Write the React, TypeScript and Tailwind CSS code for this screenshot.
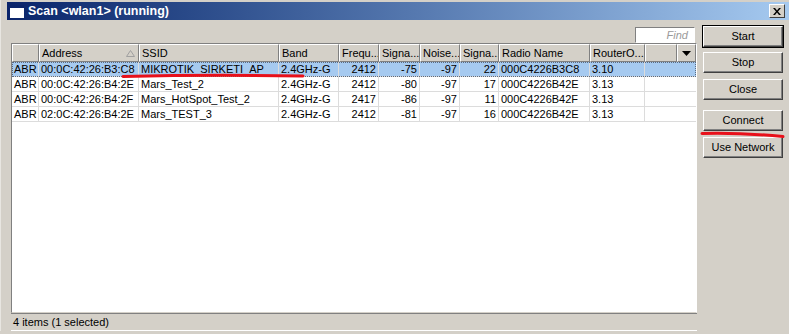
import React from "react";

type Col = { label: string; w: number; right?: boolean };

const cols: Col[] = [
  { label: "", w: 27 },
  { label: "Address", w: 100 },
  { label: "SSID", w: 140 },
  { label: "Band", w: 60 },
  { label: "Frequ...", w: 40, right: true },
  { label: "Signa...", w: 41, right: true },
  { label: "Noise...", w: 40, right: true },
  { label: "Signa...", w: 39, right: true },
  { label: "Radio Name", w: 91 },
  { label: "RouterO...", w: 55 },
  { label: "", w: 32 },
  { label: "", w: 19 },
];

const rows: string[][] = [
  ["ABR", "00:0C:42:26:B3:C8", "MIKROTIK_SIRKETI_AP", "2.4GHz-G", "2412", "-75", "-97", "22", "000C4226B3C8", "3.10", "", ""],
  ["ABR", "00:0C:42:26:B4:2E", "Mars_Test_2", "2.4GHz-G", "2412", "-80", "-97", "17", "000C4226B42E", "3.13", "", ""],
  ["ABR", "00:0C:42:26:B4:2F", "Mars_HotSpot_Test_2", "2.4GHz-G", "2417", "-86", "-97", "11", "000C4226B42F", "3.13", "", ""],
  ["ABR", "02:0C:42:26:B4:2E", "Mars_TEST_3", "2.4GHz-G", "2412", "-81", "-97", "16", "000C4226B42E", "3.13", "", ""],
];

const WinButton = ({ label, isDefault }: { label: string; isDefault?: boolean }) => (
  <div className={isDefault ? "border border-black" : "border border-transparent"}>
    <div className="h-[21px] flex items-center justify-center border border-t-white border-l-white border-r-[#404040] border-b-[#404040] shadow-[inset_-1px_-1px_0_#808080] text-[11px] text-black">
      {label}
    </div>
  </div>
);

export default function App() {
  return (
    <div className="relative w-[789px] h-[334px] bg-[#d4d0c8] overflow-hidden font-['Liberation_Sans',Arial,sans-serif] text-black">
      <div className="pl-[6px] pt-[2px] border-l-[1px] border-[#e8e6e1]">
        {/* Title bar */}
        <div className="h-[18px] flex items-center bg-gradient-to-r from-[#0a246a] to-[#a6caf0] pl-[2px] pr-[4px]">
          <div className="w-[15px] h-[13px] bg-white border-t-[3px] border-l-[1px] border-[#0a246a] mr-[4px]" />
          <span className="text-[12.5px] font-bold text-white leading-none">Scan &lt;wlan1&gt; (running)</span>
          <div className="ml-auto w-[16px] h-[14px] bg-[#d4d0c8] border border-t-white border-l-white border-r-[#404040] border-b-[#404040] flex items-center justify-center">
            <svg width="8" height="7" viewBox="0 0 8 7">
              <path d="M0 0h2l2 2.5L6 0h2L5 3.5 8 7H6L4 4.5 2 7H0l3-3.5z" fill="#000" />
            </svg>
          </div>
        </div>

        <div className="flex">
          {/* Left: table */}
          <div className="ml-[4px] w-[686px]">
            <div className="flex justify-end pt-[7px] pr-[2px]">
              <div className="w-[60px] h-[16px] bg-white border border-t-[#808080] border-l-[#808080] border-r-white border-b-white flex items-center justify-end pr-[6px]">
                <span className="text-[11px] italic text-[#9a9a9a]">Find</span>
              </div>
            </div>
            <div className="h-[270px] bg-white border border-t-[#808080] border-l-[#808080] border-r-white border-b-[#d4d0c8] flex flex-col">
              {/* Header */}
              <div className="flex h-[18px]">
                {cols.map((c, i) => (
                  <div
                    key={i}
                    style={{ width: c.w }}
                    className="relative h-[18px] bg-[#d4d0c8] border border-t-white border-l-white border-r-[#808080] border-b-[#808080] flex items-center px-[2px] text-[11px] whitespace-nowrap overflow-hidden"
                  >
                    {i === cols.length - 1 ? (
                      <svg width="9" height="5" viewBox="0 0 9 5" className="mx-auto">
                        <path d="M0 0h9L4.5 5z" fill="#000" />
                      </svg>
                    ) : (
                      c.label
                    )}
                    {i === 1 && (
                      <svg width="9" height="7" viewBox="0 0 9 7" className="absolute right-[3px] top-[5px]">
                        <path d="M4.5 0.5L8.5 6.5H0.5z" fill="none" stroke="#a0a0a0" />
                      </svg>
                    )}
                  </div>
                ))}
              </div>
              {/* Rows */}
              {rows.map((r, ri) => (
                <div
                  key={ri}
                  className={`flex h-[15px] border-b border-[#dcdcdc] ${ri === 0 ? "bg-[#a6caf0] outline-1 outline-dotted outline-[#5a6a80] -outline-offset-1" : ""}`}
                >
                  {r.map((v, ci) => (
                    <div
                      key={ci}
                      style={{ width: cols[ci].w }}
                      className={`h-[14px] flex items-center px-[2px] text-[11px] leading-none whitespace-nowrap overflow-hidden ${ci < 10 ? "border-r border-[#dcdcdc]" : ""} ${cols[ci].right ? "justify-end" : ""}`}
                    >
                      {v}
                    </div>
                  ))}
                </div>
              ))}
            </div>
            {/* Status bar */}
            <div className="h-[18px] border-t border-[#808080] border-b border-b-white flex items-center pl-[2px] text-[11px]">
              4 items (1 selected)
            </div>
          </div>

          {/* Right: buttons */}
          <div className="ml-[5px] w-[82px] pt-[5px] flex flex-col">
            <WinButton label="Start" isDefault />
            <div className="mt-[3px]">
              <WinButton label="Stop" />
            </div>
            <div className="mt-[4px]">
              <WinButton label="Close" />
            </div>
            <div className="mt-[8px]">
              <WinButton label="Connect" />
            </div>
            <div className="mt-[4px]">
              <WinButton label="Use Network" />
            </div>
          </div>
        </div>
      </div>

      {/* Red hand-drawn marks */}
      <svg className="absolute left-0 top-0 pointer-events-none" width="789" height="334">
        <path d="M123 76.5 Q210 74.5 303 76" stroke="#e8101a" strokeWidth="3" fill="none" strokeLinecap="round" />
        <path d="M702 133.5 Q740 132.5 783 136.5" stroke="#e8101a" strokeWidth="3" fill="none" strokeLinecap="round" />
      </svg>
    </div>
  );
}
